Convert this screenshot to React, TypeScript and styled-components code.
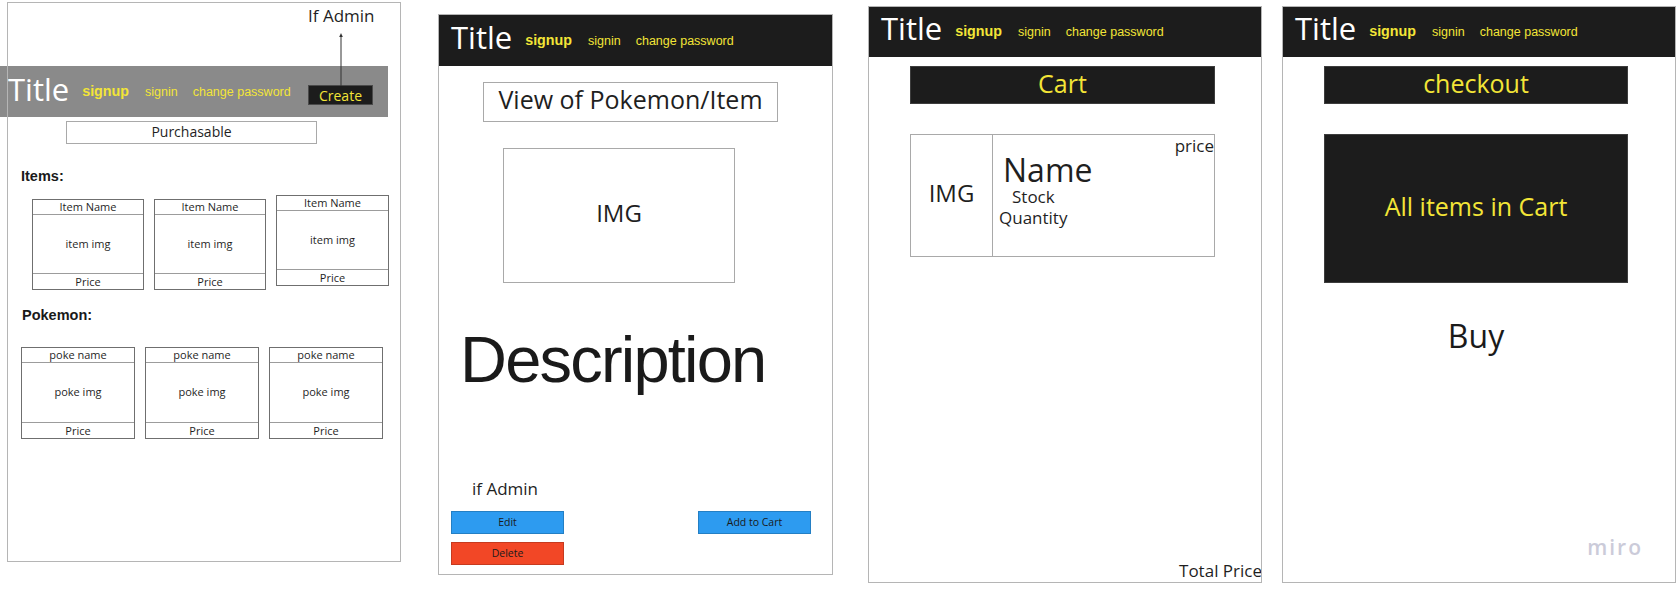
import React from 'react';
import styled, { createGlobalStyle } from 'styled-components';

const YELLOW = '#f3e537';
const INK = '#1c1c1c';
const TEXT = '#1f1f1f';

const GlobalStyle = createGlobalStyle`
  * {
    box-sizing: border-box;
  }

  body {
    margin: 0;
    background: #ffffff;
    font-family: 'Open Sans', 'Liberation Sans', sans-serif;
    color: ${TEXT};
  }
`;

const Board = styled.main`
  display: flex;
  align-items: flex-start;
  width: 1680px;
  height: 595px;
  overflow: hidden;
`;

const Frame = styled.section<{ $w: number; $h: number; $top: number; $left: number }>`
  position: relative;
  display: flex;
  flex-direction: column;
  flex: none;
  width: ${(p) => p.$w}px;
  height: ${(p) => p.$h}px;
  margin-top: ${(p) => p.$top}px;
  margin-left: ${(p) => p.$left}px;
  background: #ffffff;

  &::after {
    content: '';
    position: absolute;
    inset: 0;
    border: 1px solid #b5b5b5;
    pointer-events: none;
  }
`;

/* ---------- header ---------- */

const NavBar = styled.header<{ $gray?: boolean; $h: number }>`
  display: flex;
  align-items: flex-end;
  flex: none;
  height: ${(p) => p.$h}px;
  width: ${(p) => (p.$gray ? '388px' : 'auto')};
  margin-left: ${(p) => (p.$gray ? '-7px' : '0')};
  padding: 0 0 ${(p) => (p.$gray ? 12 : 13)}px ${(p) => (p.$gray ? 8 : 13)}px;
  background: ${(p) => (p.$gray ? '#8a8a8a' : INK)};
`;

const Brand = styled.span`
  font-family: 'Open Sans', sans-serif;
  font-size: 31px;
  line-height: 1;
  color: #ffffff;
`;

const NavLink = styled.span<{ $bold?: boolean; $gap: number; $lift: number }>`
  margin-left: ${(p) => p.$gap}px;
  margin-bottom: ${(p) => p.$lift}px;
  font-family: 'Liberation Sans', Arial, sans-serif;
  font-size: ${(p) => (p.$bold ? '14.3px' : '12.5px')};
  font-weight: ${(p) => (p.$bold ? 700 : 400)};
  line-height: 1;
  color: ${YELLOW};
  white-space: nowrap;
`;

const CreateButton = styled.button`
  position: relative;
  flex: none;
  width: 65px;
  height: 20px;
  margin: 0 15px 0 auto;
  padding: 0;
  background: ${INK};
  border: 1px solid #4a4a4a;
  color: ${YELLOW};
  font-family: 'Open Sans', sans-serif;
  font-size: 14px;
  line-height: 17px;
`;

const Connector = styled.svg`
  position: absolute;
  bottom: 100%;
  left: 28px;
  width: 8px;
  height: 53px;
  overflow: visible;
`;

interface NavProps {
  gray?: boolean;
  height: number;
  lift: number;
  children?: React.ReactNode;
}

const Nav = ({ gray, height, lift, children }: NavProps) => (
  <NavBar $gray={gray} $h={height}>
    <Brand>Title</Brand>
    <NavLink $bold $gap={13} $lift={lift}>
      signup
    </NavLink>
    <NavLink $gap={16} $lift={lift}>
      signin
    </NavLink>
    <NavLink $gap={15} $lift={lift}>
      change password
    </NavLink>
    {children}
  </NavBar>
);

/* ---------- shared boxes ---------- */

const Centered = styled.div<{
  $w: number;
  $h: number;
  $top?: number;
  $left?: number;
  $size: number;
  $dark?: boolean;
  $lift?: number;
}>`
  display: flex;
  align-items: center;
  justify-content: center;
  flex: none;
  width: ${(p) => p.$w}px;
  height: ${(p) => p.$h}px;
  margin: ${(p) => p.$top ?? 0}px 0 0 ${(p) => p.$left ?? 0}px;
  padding-bottom: ${(p) => p.$lift ?? 5}px;
  border: 1px solid ${(p) => (p.$dark ? '#3d3d3d' : '#a9a9a9')};
  background: ${(p) => (p.$dark ? INK : '#ffffff')};
  color: ${(p) => (p.$dark ? YELLOW : TEXT)};
  font-size: ${(p) => p.$size}px;
  line-height: 1;
  white-space: nowrap;
`;

const Plain = styled.div<{ $size: number; $top?: number; $left?: number }>`
  flex: none;
  margin: ${(p) => p.$top ?? 0}px 0 0 ${(p) => p.$left ?? 0}px;
  font-size: ${(p) => p.$size}px;
  line-height: 1;
  color: ${TEXT};
  white-space: nowrap;
`;

/* ---------- listing page ---------- */

const AdminNote = styled.div`
  flex: none;
  height: 64px;
  padding: 5px 0 0 301px;
  font-size: 17px;
  line-height: 1;
  color: ${TEXT};
`;

const GroupLabel = styled.h3<{ $top: number; $left: number }>`
  margin: ${(p) => p.$top}px 0 0 ${(p) => p.$left}px;
  font-family: 'Liberation Sans', Arial, sans-serif;
  font-size: 14.5px;
  font-weight: 700;
  line-height: 1;
  color: #1a1a1a;
`;

const TileRow = styled.div<{ $top: number; $left: number }>`
  display: flex;
  align-items: flex-start;
  gap: 10px;
  margin: ${(p) => p.$top}px 0 0 ${(p) => p.$left}px;
`;

const Tile = styled.div<{ $w: number; $h: number; $drop: number }>`
  display: flex;
  flex-direction: column;
  flex: none;
  width: ${(p) => p.$w}px;
  height: ${(p) => p.$h}px;
  margin-top: ${(p) => p.$drop}px;
  border: 1px solid #6f6f6f;
  font-size: 11px;
  line-height: 1;
  color: ${TEXT};
`;

const TileCap = styled.div`
  display: flex;
  align-items: center;
  justify-content: center;
  height: 15px;
  padding-bottom: 1px;
  border-bottom: 1px solid #9c9c9c;
`;

const TileBody = styled.div`
  display: flex;
  flex: 1;
  align-items: center;
  justify-content: center;
  padding-bottom: 2px;
`;

const TileFoot = styled.div`
  display: flex;
  align-items: center;
  justify-content: center;
  height: 16px;
  padding-bottom: 1px;
  border-top: 1px solid #9c9c9c;
`;

interface TileSpec {
  w: number;
  drop: number;
}

const TileGroup = ({
  specs,
  h,
  name,
  img,
  top,
  left,
}: {
  specs: TileSpec[];
  h: number;
  name: string;
  img: string;
  top: number;
  left: number;
}) => (
  <TileRow $top={top} $left={left}>
    {specs.map((s, i) => (
      <Tile key={i} $w={s.w} $h={h} $drop={s.drop}>
        <TileCap>{name}</TileCap>
        <TileBody>{img}</TileBody>
        <TileFoot>Price</TileFoot>
      </Tile>
    ))}
  </TileRow>
);

/* ---------- detail page ---------- */

const Description = styled.p`
  margin: 44px 0 0 22px;
  font-family: 'Liberation Sans', Arial, sans-serif;
  font-size: 65px;
  letter-spacing: -1.8px;
  line-height: 1;
  color: #1a1a1a;
`;

const ActionRow = styled.div`
  display: flex;
  justify-content: space-between;
  margin: 14px 22px 0 13px;
`;

const ActionButton = styled.button<{ $tone: 'blue' | 'red'; $top?: number; $left?: number }>`
  flex: none;
  align-self: flex-start;
  width: 113px;
  height: 23px;
  margin: ${(p) => p.$top ?? 0}px 0 0 ${(p) => p.$left ?? 0}px;
  padding: 0;
  border: 1px solid rgba(0, 0, 0, 0.18);
  background: ${(p) => (p.$tone === 'blue' ? '#2d9bf0' : '#f24726')};
  font-family: 'Open Sans', sans-serif;
  font-size: 10.5px;
  line-height: 1;
  color: #1a1a1a;
`;

/* ---------- cart page ---------- */

const CartLine = styled.div`
  display: flex;
  flex: none;
  width: 305px;
  height: 123px;
  margin: 30px 0 0 42px;
  border: 1px solid #a9a9a9;
`;

const CartThumb = styled.div`
  display: flex;
  align-items: center;
  justify-content: center;
  flex: none;
  width: 82px;
  padding-bottom: 6px;
  border-right: 1px solid #a9a9a9;
  font-size: 24px;
  line-height: 1;
`;

const CartInfo = styled.div`
  display: flex;
  flex: 1;
  flex-direction: column;
  align-items: flex-start;
  padding-top: 2px;
`;

const PriceTag = styled.span`
  align-self: flex-end;
  font-size: 17px;
  line-height: 1;
`;

const Corner = styled.div<{ $right: number; $bottom: number }>`
  margin: auto ${(p) => p.$right}px ${(p) => p.$bottom}px auto;
  font-size: 17px;
  line-height: 1;
  color: ${TEXT};
  white-space: nowrap;
`;

/* ---------- checkout page ---------- */

const BuyLabel = styled.div`
  width: 304px;
  margin: 37px 0 0 42px;
  font-size: 32px;
  line-height: 1;
  text-align: center;
  color: #1a1a1a;
`;

const Watermark = styled.div`
  margin: auto 33px 25px auto;
  font-size: 21px;
  font-weight: 600;
  letter-spacing: 2px;
  line-height: 1;
  color: #cbcbd9;
`;

export default function App() {
  return (
    <>
      <GlobalStyle />
      <Board>
        {/* listing */}
        <Frame $w={394} $h={560} $top={2} $left={7}>
          <AdminNote>If Admin</AdminNote>
          <Nav gray height={51} lift={7}>
            <CreateButton>
              <Connector viewBox="0 0 8 53">
                <path d="M4 53 V2" stroke="#333" strokeWidth="1" fill="none" />
                <path d="M4 0 L2.2 4 L5.8 4 Z" fill="#333" />
              </Connector>
              Create
            </CreateButton>
          </Nav>
          <Centered $w={251} $h={23} $top={4} $left={59} $size={14} $lift={2}>
            Purchasable
          </Centered>
          <GroupLabel $top={25} $left={14}>
            Items:
          </GroupLabel>
          <TileGroup
            specs={[
              { w: 112, drop: 4 },
              { w: 112, drop: 4 },
              { w: 113, drop: 0 },
            ]}
            h={91}
            name="Item Name"
            img="item img"
            top={11.5}
            left={25}
          />
          <GroupLabel $top={18} $left={15}>
            Pokemon:
          </GroupLabel>
          <TileGroup
            specs={[
              { w: 114, drop: 0 },
              { w: 114, drop: 0 },
              { w: 114, drop: 0 },
            ]}
            h={92}
            name="poke name"
            img="poke img"
            top={24.5}
            left={14}
          />
        </Frame>

        {/* detail */}
        <Frame $w={395} $h={561} $top={14} $left={37}>
          <Nav height={52} lift={6} />
          <Centered $w={295} $h={40} $top={16} $left={45} $size={25}>
            View of Pokemon/Item
          </Centered>
          <Centered $w={232} $h={135} $top={26} $left={65} $size={24}>
            IMG
          </Centered>
          <Description>Description</Description>
          <Plain $size={17} $top={88} $left={34}>
            if Admin
          </Plain>
          <ActionRow>
            <ActionButton $tone="blue">Edit</ActionButton>
            <ActionButton $tone="blue">Add to Cart</ActionButton>
          </ActionRow>
          <ActionButton $tone="red" $top={8} $left={13}>
            Delete
          </ActionButton>
        </Frame>

        {/* cart */}
        <Frame $w={394} $h={577} $top={6} $left={35}>
          <Nav height={51} lift={6} />
          <Centered $w={305} $h={38} $top={9} $left={42} $size={25} $dark $lift={4}>
            Cart
          </Centered>
          <CartLine>
            <CartThumb>IMG</CartThumb>
            <CartInfo>
              <PriceTag>price</PriceTag>
              <Plain $size={32} $left={10}>
                Name
              </Plain>
              <Plain $size={17} $top={2} $left={19}>
                Stock
              </Plain>
              <Plain $size={17} $top={4} $left={6}>
                Quantity
              </Plain>
            </CartInfo>
          </CartLine>
          <Corner $right={0} $bottom={4}>
            Total Price
          </Corner>
        </Frame>

        {/* checkout */}
        <Frame $w={394} $h={577} $top={6} $left={20}>
          <Nav height={51} lift={6} />
          <Centered $w={304} $h={38} $top={9} $left={42} $size={25} $dark $lift={4}>
            checkout
          </Centered>
          <Centered $w={304} $h={149} $top={30} $left={42} $size={25} $dark>
            All items in Cart
          </Centered>
          <BuyLabel>Buy</BuyLabel>
          <Watermark>miro</Watermark>
        </Frame>
      </Board>
    </>
  );
}
